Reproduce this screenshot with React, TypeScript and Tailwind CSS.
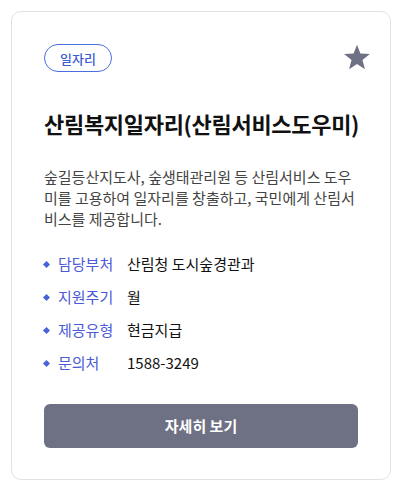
import React from 'react';

const font = { fontFamily: '"Noto Sans CJK KR", "Noto Sans", sans-serif' };

interface InfoRow {
  label: string;
  value: string;
}

const rows: InfoRow[] = [
  { label: '담당부처', value: '산림청 도시숲경관과' },
  { label: '지원주기', value: '월' },
  { label: '제공유형', value: '현금지급' },
  { label: '문의처', value: '1588-3249' },
];

export default function App() {
  return (
    <div className="w-[402px] h-[490px] bg-white p-[11px]" style={font}>
      <div className="h-[469px] rounded-[10px] border border-[#e2e2e2] bg-white pl-[32px] pr-[28px] pt-[32px] flex flex-col">
        <div className="flex items-center justify-between">
          <span className="h-[28px] px-[15px] rounded-full border border-[#4a6ee0] text-[#3c5cd0] text-[13px] font-medium flex items-center leading-none">
            일자리
          </span>
          <svg width="28" height="28" viewBox="0 0 24 24" className="mr-[-9px] mt-[-3px]">
            <path
              d="M12 1.5l2.9 7.6 8.1.4-6.3 5.1 2.1 7.9L12 18l-6.8 4.5 2.1-7.9L1 9.5l8.1-.4z"
              fill="#6e7083"
            />
          </svg>
        </div>

        <h1 className="mt-[36px] text-[22px] font-bold text-[#111] tracking-[-0.3px] leading-[30px]">
          산림복지일자리(산림서비스도우미)
        </h1>

        <p className="mt-[28px] text-[15px] text-[#444] leading-[21px]">
          숲길등산지도사, 숲생태관리원 등 산림서비스 도우미를 고용하여 일자리를 창출하고, 국민에게 산림서비스를 제공합니다.
        </p>

        <ul className="mt-[24px] flex flex-col gap-[11px]">
          {rows.map((row) => (
            <li key={row.label} className="flex items-center h-[22px] text-[15px]">
              <span className="w-[5px] h-[5px] bg-[#4a62d8] rotate-45 mr-[9px]" />
              <span className="w-[69px] text-[#4a5ad8]">{row.label}</span>
              <span className="text-[#111]">{row.value}</span>
            </li>
          ))}
        </ul>

        <button className="mt-[30px] h-[44px] mr-[4px] rounded-[6px] bg-[#6e7083] text-white text-[15px] font-bold">
          자세히 보기
        </button>
      </div>
    </div>
  );
}
